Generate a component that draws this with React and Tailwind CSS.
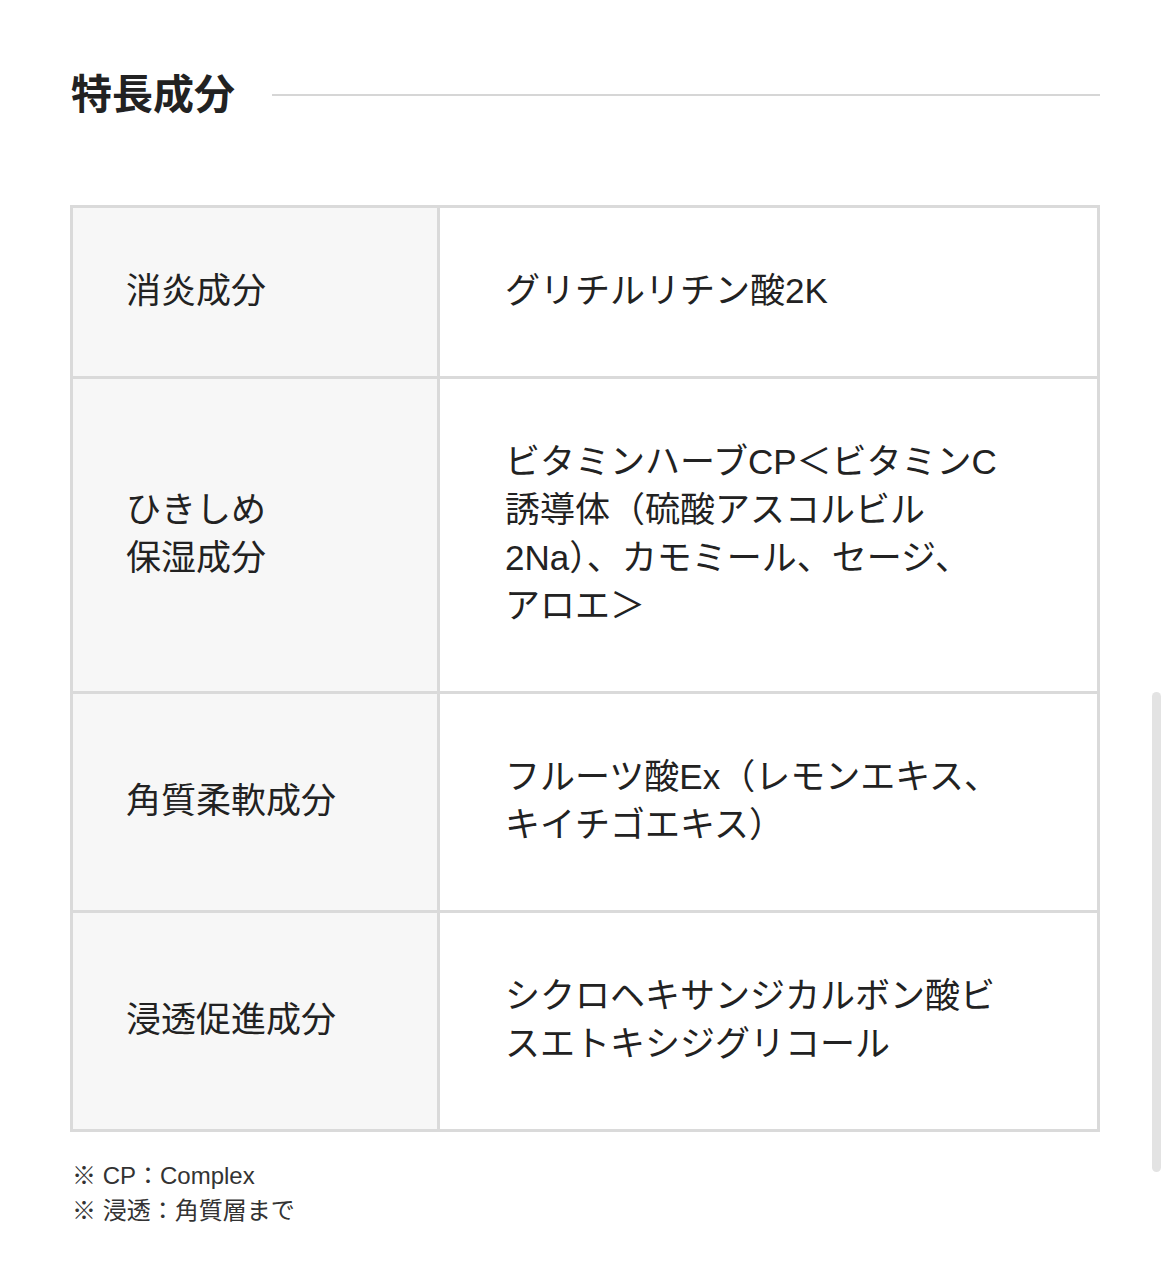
const rows = [
  { label: ['消炎成分'], value: ['グリチルリチン酸2K'] },
  {
    label: ['ひきしめ', '保湿成分'],
    value: ['ビタミンハーブCP＜ビタミンC', '誘導体（硫酸アスコルビル', '2Na）、カモミール、セージ、', 'アロエ＞'],
  },
  { label: ['角質柔軟成分'], value: ['フルーツ酸Ex（レモンエキス、', 'キイチゴエキス）'] },
  { label: ['浸透促進成分'], value: ['シクロヘキサンジカルボン酸ビ', 'スエトキシジグリコール'] },
]

function Lines({ lines }) {
  return lines.map((line, i) => (
    <span key={i} className="block whitespace-nowrap">
      {line}
    </span>
  ))
}

export default function App() {
  return (
    <div
      className="relative min-h-[1274px] w-full bg-white text-[#222222]"
      style={{ fontFamily: '"Liberation Sans", "Noto Sans CJK JP", sans-serif' }}
    >
      <div className="ml-[70px] w-[1030px] pt-[65px]">
        <div className="flex items-center">
          <h2 className="pl-[1px] text-[41px] leading-[60px] font-bold">特長成分</h2>
          <div className="ml-[37px] h-[2px] flex-1 bg-[#d6d6d6]" />
        </div>

        <div className="mt-[80px] grid grid-cols-[367px_1fr] border-t-[3px] border-l-[3px] border-[#dadada] text-[35px] leading-[48px]">
          {rows.map((row, i) => (
            <div key={i} className="contents">
              <div className="flex items-center border-r-[3px] border-b-[3px] border-[#dadada] bg-[#f7f7f7] pt-[59px] pb-[61px] pl-[53px]">
                <div>
                  <Lines lines={row.label} />
                </div>
              </div>
              <div className="flex items-center border-r-[3px] border-b-[3px] border-[#dadada] pt-[59px] pb-[61px] pl-[65px]">
                <div>
                  <Lines lines={row.value} />
                </div>
              </div>
            </div>
          ))}
        </div>

        <div className="mt-[26px] pl-[2px] text-[24px] leading-[35px] text-[#333333]">
          <p>※ CP：Complex</p>
          <p>※ 浸透：角質層まで</p>
        </div>
      </div>

      <div className="absolute top-[692px] left-[1152px] h-[480px] w-[9px] rounded-full bg-[#e3e3e3]" />
    </div>
  )
}
